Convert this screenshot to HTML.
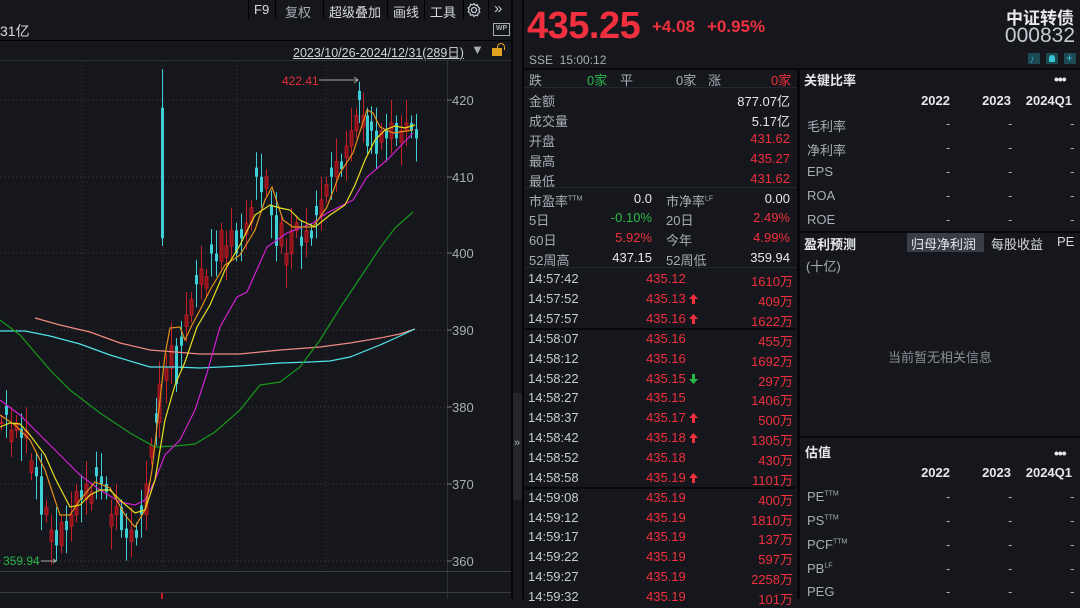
<!DOCTYPE html>
<html><head><meta charset="utf-8">
<style>
*{margin:0;padding:0;box-sizing:border-box}
body{width:1080px;height:599px;overflow:hidden;background:#15171c;font-family:"Liberation Sans","Noto Sans CJK SC",sans-serif;color:#c8ccd2;position:relative}
.a{position:absolute;white-space:nowrap}
.r{color:#f0303e}.g{color:#2bb84a}.w{color:#e6e8eb}.gy{color:#a9adb3}
.f13{font-size:13px}
.hl{position:absolute;height:2px;background:#06070a}
</style></head><body>
<div class="a" style="left:0;top:0;width:512px;height:599px;background:#15171c"></div>
<div class="a" style="left:248px;top:0;width:1px;height:19px;background:#000"></div>
<div class="a gy" style="left:254px;top:2px;font-size:13px;color:#d8dade">F9</div>
<div class="a" style="left:275px;top:0;width:1px;height:19px;background:#000"></div>
<div class="a gy" style="left:285px;top:2px;font-size:13px">复权</div>
<div class="a" style="left:323px;top:0;width:1px;height:19px;background:#000"></div>
<div class="a" style="left:329px;top:2px;font-size:13px;color:#d8dade">超级叠加</div>
<div class="a" style="left:387px;top:0;width:1px;height:19px;background:#000"></div>
<div class="a" style="left:393px;top:2px;font-size:13px;color:#d8dade">画线</div>
<div class="a" style="left:424px;top:0;width:1px;height:19px;background:#000"></div>
<div class="a" style="left:430px;top:2px;font-size:13px;color:#d8dade">工具</div>
<div class="a" style="left:463px;top:0;width:1px;height:19px;background:#000"></div>
<svg class="a" style="left:466px;top:2px" width="16" height="16" viewBox="0 0 16 16"><circle cx="8" cy="8" r="2.5" fill="none" stroke="#c8ccd2" stroke-width="1.3"/><path d="M8 1.5l1.3 1.8 2.2-.5.5 2.2 1.8 1.3-1 2 1 1.9-1.8 1.3-.5 2.2-2.2-.5L8 14.5l-1.3-1.8-2.2.5-.5-2.2-1.8-1.3 1-1.9-1-2 1.8-1.3.5-2.2 2.2.5z" fill="none" stroke="#c8ccd2" stroke-width="1.2"/></svg>
<div class="a" style="left:488px;top:0;width:1px;height:19px;background:#000"></div>
<div class="a" style="left:494px;top:0px;font-size:15px;color:#c8ccd2">»</div>
<div class="a" style="left:0;top:21px;font-size:14px;color:#d8dade">31亿</div>
<div class="a" style="left:493px;top:23px;width:17px;height:13px;border:1.5px solid #a9adb3;font-size:7px;color:#a9adb3;text-align:center;line-height:9px;font-weight:bold">WP</div>
<div class="a" style="left:0;top:40px;width:512px;height:1px;background:#000"></div>
<div class="a" style="left:293px;top:42px;font-size:12.5px;color:#cfd2d6;text-decoration:underline">2023/10/26-2024/12/31(289日)</div>
<div class="a" style="left:471px;top:42px;font-size:13px;color:#a9adb3">▼</div>
<div class="a" style="left:492px;top:48px;width:10px;height:8px;background:#e0a321"></div>
<div class="a" style="left:497px;top:43px;width:8px;height:7px;border:1.5px solid #e0a321;border-bottom:none;border-radius:4px 4px 0 0"></div>
<div class="a" style="left:0;top:60px;width:512px;height:1px;background:#2b2e34"></div>
<svg class="a" style="left:0;top:0" width="512" height="599">
<g stroke="#3a3d44" stroke-dasharray="1,3" stroke-width="1">
<line x1="82" y1="61" x2="82" y2="571"/><line x1="163" y1="61" x2="163" y2="571"/><line x1="237" y1="61" x2="237" y2="571"/><line x1="326" y1="61" x2="326" y2="571"/>
<line x1="0" y1="100" x2="447" y2="100"/><line x1="0" y1="177" x2="447" y2="177"/><line x1="0" y1="253" x2="447" y2="253"/><line x1="0" y1="330" x2="447" y2="330"/><line x1="0" y1="407" x2="447" y2="407"/><line x1="0" y1="484" x2="447" y2="484"/><line x1="0" y1="561" x2="447" y2="561"/>
</g>
<line x1="447.5" y1="61" x2="447.5" y2="599" stroke="#2e3137"/>
<g stroke="#777" ><line x1="447" y1="100" x2="452" y2="100"/><line x1="447" y1="177" x2="452" y2="177"/><line x1="447" y1="253" x2="452" y2="253"/><line x1="447" y1="330" x2="452" y2="330"/><line x1="447" y1="407" x2="452" y2="407"/><line x1="447" y1="484" x2="452" y2="484"/><line x1="447" y1="561" x2="452" y2="561"/></g>
<g font-size="13" fill="#a9adb3" font-family="Liberation Sans,sans-serif">
<text x="452" y="105">420</text><text x="452" y="182">410</text><text x="452" y="258">400</text><text x="452" y="335">390</text><text x="452" y="412">380</text><text x="452" y="489">370</text><text x="452" y="566">360</text>
</g>
<line x1="0" y1="571.5" x2="512" y2="571.5" stroke="#3a3d44"/>
<line x1="0" y1="592.5" x2="512" y2="592.5" stroke="#3a3d44"/>
<rect x="161" y="593" width="2" height="6" fill="#c81e28"/>
<g id="cd"></g>
<g fill="none" stroke-width="1.2">
<polyline stroke="#f08a80" points="35,318 60,325 90,332 120,343 150,350 175,352 200,354 240,354 280,350 320,347 350,343 380,338 400,334 415,329"/>
<polyline stroke="#4fe3e8" points="0,331 25,331 50,336 80,344 110,355 150,367 175,367 200,368 240,366 280,363 310,362 330,361 350,357 380,345 400,336 415,329"/>
<polyline stroke="#1a9a1a" points="0,320 20,335 50,370 70,390 100,413 130,433 155,447 175,446 195,444 215,432 240,410 260,385 280,382 300,367 320,340 340,308 360,278 380,248 395,228 413,212"/>
<polyline stroke="#d21fd2" points="0,400 20,415 40,435 60,455 80,475 100,490 120,502 135,505 145,500 155,480 165,455 180,440 195,410 207,373 220,327 237,297 247,292 267,247 287,233 313,223 327,213 353,200 367,177 387,160 413,133"/>
<polyline stroke="#e5901a" points="0,415 15,425 30,440 45,470 60,515 70,515 80,500 95,482 110,488 125,515 135,527 145,510 152,470 160,400 165,355 170,328 180,327 185,340 192,325 200,310 210,290 225,265 240,255 255,230 265,200 272,187 283,220 293,227 313,227 327,207 340,173 353,153 367,110 373,113 380,127 393,133 413,130"/>
<polyline stroke="#e8e020" points="0,427 10,423 20,424 30,435 45,455 55,478 70,507 80,505 90,495 100,490 110,490 120,500 135,513 145,510 155,480 165,420 175,385 185,362 197,327 210,305 225,270 240,245 255,215 270,205 280,208 290,210 300,220 315,227 330,215 345,205 355,185 365,160 375,140 385,130 395,126 405,128 415,125"/>
</g>
<text x="282" y="85" font-size="12" fill="#e8303a">422.41</text>
<path d="M319 80h39m-4-3l4 3-4 3" stroke="#aaa" fill="none"/>
<text x="3" y="565" font-size="12" fill="#2bb84a">359.94</text>
<path d="M41 561h15m-3-2l3 2-3 2" stroke="#aaa" fill="none"/>
</svg>
<div class="a" style="left:511px;top:0;width:2px;height:599px;background:#050608"></div>
<div class="a" style="left:513px;top:393px;width:10px;height:107px;background:#24262c;border-radius:0 3px 3px 0"></div>
<div class="a" style="left:514px;top:437px;font-size:11px;color:#a9adb3">»</div>
<div class="a" style="left:522px;top:0;width:2px;height:599px;background:#050608"></div>

<div class="a r" style="left:527px;top:5px;font-size:38px;font-weight:bold;letter-spacing:-0.5px">435.25</div>
<div class="a r" style="left:652px;top:17px;font-size:17px;font-weight:bold">+4.08</div>
<div class="a r" style="left:707px;top:17px;font-size:17px;font-weight:bold">+0.95%</div>
<div class="a w" style="right:6px;top:4px;font-size:17px;font-weight:bold">中证转债</div>
<div class="a" style="right:5px;top:24px;font-size:21px;color:#c8ccd2">000832</div>
<div class="a gy" style="left:529px;top:53px;font-size:12px">SSE&nbsp;&nbsp;15:00:12</div>
<div class="a" style="left:1028px;top:53px;width:12px;height:11px;background:#1d4a52"></div><div class="a" style="left:1031px;top:55px;font-size:9px;color:#3ad">/</div>
<div class="a" style="left:1046px;top:53px;width:12px;height:11px;background:#1d4a52"></div><div class="a" style="left:1049px;top:55px;width:6px;height:7px;background:#3bc4d6;border-radius:3px 3px 0 0"></div>
<div class="a" style="left:1064px;top:53px;width:12px;height:11px;background:#1d4a52"></div><div class="a" style="left:1066px;top:51px;font-size:12px;color:#3bc4d6">+</div>
<div class="hl" style="left:524px;top:68px;width:556px"></div>

<div class="a" style="left:797px;top:70px;width:3px;height:529px;background:#06070a"></div>
<div class="f13">
<div class="a gy" style="left:529px;top:70px">跌</div><div class="a g" style="left:587px;top:70px">0家</div>
<div class="a gy" style="left:620px;top:70px">平</div><div class="a gy" style="left:676px;top:70px">0家</div>
<div class="a gy" style="left:708px;top:70px">涨</div><div class="a r" style="left:771px;top:70px">0家</div>
</div>
<div class="hl" style="left:524px;top:87px;width:273px;background:#24272d;height:1px"></div>
<div class="f13">
<div class="a gy" style="left:529px;top:91px">金额</div><div class="a w" style="right:290px;top:91px">877.07亿</div>
<div class="a gy" style="left:529px;top:111px">成交量</div><div class="a w" style="right:290px;top:111px">5.17亿</div>
<div class="a gy" style="left:529px;top:131px">开盘</div><div class="a r" style="right:290px;top:131px">431.62</div>
<div class="a gy" style="left:529px;top:151px">最高</div><div class="a r" style="right:290px;top:151px">435.27</div>
<div class="a gy" style="left:529px;top:171px">最低</div><div class="a r" style="right:290px;top:171px">431.62</div>
</div>
<div class="hl" style="left:524px;top:187px;width:273px;background:#24272d;height:1px"></div>
<div class="f13">
<div class="a gy" style="left:529px;top:191px">市盈率<sup style="font-size:7px">TTM</sup></div><div class="a w" style="right:428px;top:191px">0.0</div>
<div class="a gy" style="left:666px;top:191px">市净率<sup style="font-size:7px">LF</sup></div><div class="a w" style="right:290px;top:191px">0.00</div>
<div class="a gy" style="left:529px;top:210px">5日</div><div class="a g" style="right:428px;top:210px">-0.10%</div>
<div class="a gy" style="left:666px;top:210px">20日</div><div class="a r" style="right:290px;top:210px">2.49%</div>
<div class="a gy" style="left:529px;top:230px">60日</div><div class="a r" style="right:428px;top:230px">5.92%</div>
<div class="a gy" style="left:666px;top:230px">今年</div><div class="a r" style="right:290px;top:230px">4.99%</div>
<div class="a gy" style="left:529px;top:250px">52周高</div><div class="a w" style="right:428px;top:250px">437.15</div>
<div class="a gy" style="left:666px;top:250px">52周低</div><div class="a w" style="right:290px;top:250px">359.94</div>
</div>
<div class="hl" style="left:524px;top:267px;width:273px;background:#24272d;height:1px"></div>
<div id="ticks" class="f13"></div>
<div class="hl" style="left:525px;top:328px;width:270px"></div>
<div class="hl" style="left:525px;top:487px;width:270px"></div>

<div class="a w" style="left:804px;top:70px;font-size:13px;font-weight:bold">关键比率</div>
<div class="a w" style="left:1054px;top:71px;font-size:14px;font-weight:bold;letter-spacing:-1px">•••</div>
<div class="a w" style="right:130px;top:93px;font-size:13px;font-weight:bold">2022</div>
<div class="a w" style="right:69px;top:93px;font-size:13px;font-weight:bold">2023</div>
<div class="a w" style="right:8px;top:93px;font-size:13px;font-weight:bold">2024Q1</div>
<div class="f13" id="kr"></div>
<div class="hl" style="left:800px;top:231px;width:280px"></div>
<div class="a w" style="left:804px;top:234px;font-size:13px;font-weight:bold">盈利预测</div>
<div class="a" style="left:907px;top:233px;width:77px;height:19px;background:#3a3d45"></div>
<div class="a w" style="left:911px;top:234px;font-size:13px">归母净利润</div>
<div class="a" style="left:991px;top:234px;font-size:13px;color:#d8dade">每股收益</div>
<div class="a" style="left:1057px;top:234px;font-size:13px;color:#d8dade">PE</div>
<div class="a gy" style="left:806px;top:256px;font-size:13px">(十亿)</div>
<div class="a" style="left:888px;top:347px;font-size:13px;color:#8a8e94">当前暂无相关信息</div>
<div class="hl" style="left:800px;top:436px;width:280px"></div>
<div class="a w" style="left:805px;top:442px;font-size:13px;font-weight:bold">估值</div>
<div class="a w" style="left:1054px;top:445px;font-size:14px;font-weight:bold;letter-spacing:-1px">•••</div>
<div class="a w" style="right:130px;top:465px;font-size:13px;font-weight:bold">2022</div>
<div class="a w" style="right:69px;top:465px;font-size:13px;font-weight:bold">2023</div>
<div class="a w" style="right:8px;top:465px;font-size:13px;font-weight:bold">2024Q1</div>
<div class="f13" id="val"></div>

<script>
(function(){
var t=[["14:57:42","435.12","",1610],["14:57:52","435.13","u",409],["14:57:57","435.16","u",1622],["14:58:07","435.16","",455],["14:58:12","435.16","",1692],["14:58:22","435.15","d",297],["14:58:27","435.15","",1406],["14:58:37","435.17","u",500],["14:58:42","435.18","u",1305],["14:58:52","435.18","",430],["14:58:58","435.19","u",1101],["14:59:08","435.19","",400],["14:59:12","435.19","",1810],["14:59:17","435.19","",137],["14:59:22","435.19","",597],["14:59:27","435.19","",2258],["14:59:32","435.19","",101]];
var ys=[271,291,311,331,351,371,390,410,430,450,470,490,510,529,549,569,589],h="";
t.forEach(function(r,i){var y=ys[i];
h+='<div class="a" style="left:528px;top:'+y+'px;color:#c8ccd2">'+r[0]+'</div><div class="a r" style="left:646px;top:'+y+'px">'+r[1]+'</div>';
if(r[2]=="u")h+='<svg class="a" style="left:689px;top:'+(y+3)+'px" width="9" height="10"><path d="M4.5 0L9 5H6V10H3V5H0Z" fill="#f0303e"/></svg>';
if(r[2]=="d")h+='<svg class="a" style="left:689px;top:'+(y+3)+'px" width="9" height="10"><path d="M4.5 10L9 5H6V0H3V5H0Z" fill="#2bb84a"/></svg>';
h+='<div class="a r" style="right:287px;top:'+y+'px">'+r[3]+'万</div>';});
document.getElementById('ticks').innerHTML=h;
function rows(el,names,ys){var s="";names.forEach(function(n,i){var y=ys[i];s+='<div class="a gy" style="left:807px;top:'+y+'px">'+n+'</div>';[946,1008,1070].forEach(function(x){s+='<div class="a gy" style="left:'+x+'px;top:'+y+'px">-</div>'});});document.getElementById(el).innerHTML=s;}
rows('kr',["毛利率","净利率","EPS","ROA","ROE"],[116,140,164,188,212]);
rows('val',['PE<sup style="font-size:7px">TTM</sup>','PS<sup style="font-size:7px">TTM</sup>','PCF<sup style="font-size:7px">TTM</sup>','PB<sup style="font-size:7px">LF</sup>','PEG'],[489,513,537,561,584]);
var P=[[0,378],[5,379],[10,377],[15,378],[20,376],[25,377],[30,373],[35,371],[40,366],[45,367],[50,364],[55,362],[60,365],[65,364],[70,366],[75,369],[80,368],[85,370],[90,369],[95,371],[100,370],[105,369],[110,366],[115,367],[120,364],[125,363],[130,364],[135,363],[140,366],[145,370],[150,375],[155,378],[158,383],[161,402],[165,385],[170,388],[175,383],[180,388],[185,392],[190,394],[195,396],[200,398],[205,397],[210,400],[215,399],[220,403],[225,401],[230,403],[235,400],[240,402],[245,404],[250,406],[255,410],[260,408],[265,410],[270,405],[275,401],[280,404],[285,400],[290,403],[295,404],[300,401],[305,403],[310,402],[315,405],[320,407],[325,409],[330,410],[335,412],[340,411],[345,414],[350,416],[355,418],[358,420],[362,418],[366,414],[370,416],[375,413],[380,416],[385,415],[390,417],[395,415],[400,416],[405,417],[410,416],[415,415]];
function Y(p){return 100+(420-p)*7.68;}
var g="",prev=378;
P.forEach(function(c,i){var x=c[0],cl=c[1],op=prev;if(i%3==1)op=cl+1.2;if(i%4==2)op=cl-1.5;
if(x==161){op=419;cl=402;}
var up=cl>=op,hi=Math.max(op,cl)+1+(i*7%3),lo=Math.min(op,cl)-1-(i*5%3);
if(x==161)hi=424;if(x==55)lo=359.94;if(x==358)hi=422.4;
var col=up?"#c81e28":"#3fcfd6";
g+='<line x1="'+(x+1.5)+'" y1="'+Y(hi)+'" x2="'+(x+1.5)+'" y2="'+Y(lo)+'" stroke="'+col+'"/>';
var t1=Y(Math.max(op,cl)),b1=Y(Math.min(op,cl));
g+='<rect x="'+x+'" y="'+t1+'" width="3" height="'+Math.max(1,b1-t1)+'" fill="'+(up?"#8a1018":"#3fcfd6")+'" stroke="'+col+'" stroke-width="'+(up?0.8:0)+'"/>';
prev=cl;});
document.getElementById('cd').innerHTML=g;
})();
</script>
</body></html>
